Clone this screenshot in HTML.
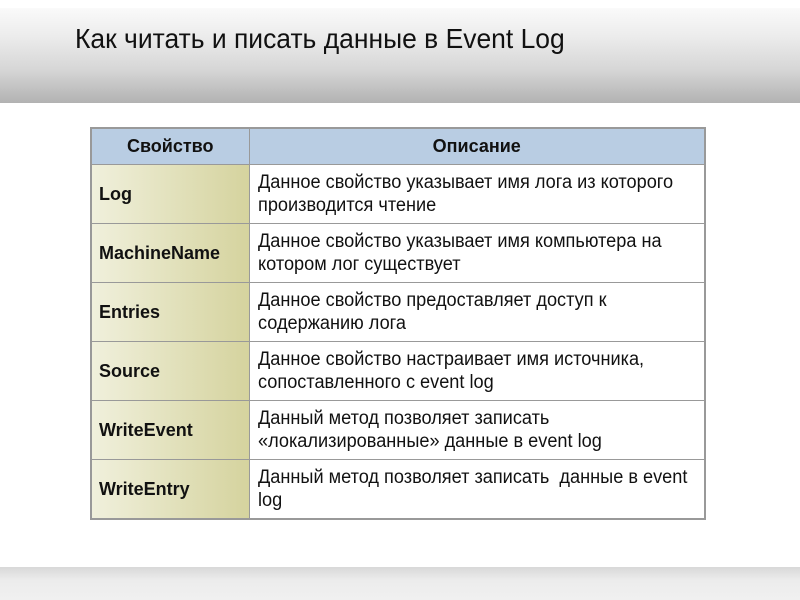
<!DOCTYPE html>
<html><head><meta charset="utf-8"><style>
body{margin:0;width:800px;height:600px;background:#fff;position:relative;overflow:hidden;font-family:"Liberation Sans",sans-serif;}
.hdr{position:absolute;left:0;top:8px;width:800px;height:95px;background:linear-gradient(#fafafa 0%,#ececec 30%,#d6d6d6 65%,#b2b2b2 100%);}
.ftr{position:absolute;left:0;top:567px;width:800px;height:33px;background:linear-gradient(#d8d8d8,#ececec 40%,#f0f0f0);}
h1{position:absolute;left:75px;top:23px;margin:0;font-weight:normal;font-size:28px;color:#111;white-space:nowrap;transform:scaleX(0.945);transform-origin:left;}
table{position:absolute;left:90px;top:127px;width:616px;border-collapse:collapse;border:2px solid #999;table-layout:fixed;}
td,th{border:1px solid #999;padding:0 8px;font-size:18px;color:#111;line-height:23px;overflow:visible;}
th{height:35px;background:#b9cde3;font-weight:bold;}
td{height:58px;background:#fff;}
td.k{font-weight:bold;background:linear-gradient(90deg,#f0f0dc,#d5d39e);padding-left:7px;}
.s{display:inline-block;white-space:nowrap;font-size:19px;transform:scaleX(0.955);transform-origin:left;}
</style></head><body>
<div class="hdr"></div>
<div class="ftr"></div>
<h1>Как читать и писать данные в Event Log</h1>
<table>
<colgroup><col style="width:158px"><col></colgroup>
<tr><th>Свойство</th><th>Описание</th></tr>
<tr><td class="k">Log</td><td><span class="s">Данное свойство указывает имя лога из которого<br>производится чтение</span></td></tr>
<tr><td class="k">MachineName</td><td><span class="s">Данное свойство указывает имя компьютера на<br>котором лог существует</span></td></tr>
<tr><td class="k">Entries</td><td><span class="s">Данное свойство предоставляет доступ к<br>содержанию лога</span></td></tr>
<tr><td class="k">Source</td><td><span class="s">Данное свойство настраивает имя источника,<br>сопоставленного с event log</span></td></tr>
<tr><td class="k">WriteEvent</td><td><span class="s">Данный метод позволяет записать<br>«локализированные» данные в event log</span></td></tr>
<tr><td class="k">WriteEntry</td><td><span class="s">Данный метод позволяет записать&nbsp; данные в event<br>log</span></td></tr>
</table>
</body></html>
